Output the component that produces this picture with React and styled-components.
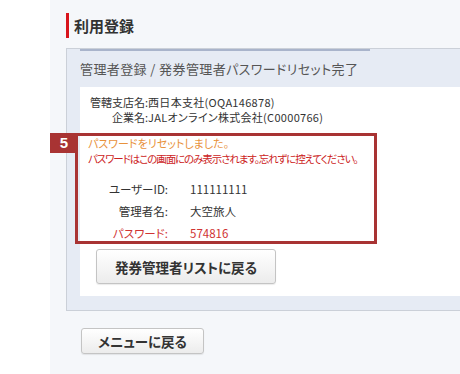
import React from "react";
import styled, { createGlobalStyle } from "styled-components";

const GlobalStyle = createGlobalStyle`
  html, body {
    margin: 0;
    padding: 0;
    background: #ffffff;
  }
  body {
    font-family: "Noto Sans CJK JP", "Liberation Sans", sans-serif;
    font-feature-settings: "palt";
    color: #333333;
  }
`;

const Page = styled.div`
  display: flex;
  height: 374px;
  overflow: hidden;
  padding-left: 50px;
`;

const Main = styled.main`
  flex: 1;
  background: #f5f7fa;
  padding: 13px 0 0 16px;
`;

const Title = styled.h1`
  margin: 0 0 10px;
  height: 25px;
  line-height: 25px;
  border-left: 3px solid #d8141c;
  padding-left: 5px;
  font-size: 15px;
  font-weight: 700;
  color: #333333;
`;

const Panel = styled.section`
  background: #e6ebf4;
  border: 1px solid #cbd0d8;
  border-right: none;
  padding: 0 0 14px 13px;
`;

const HeadRule = styled.div`
  width: 290px;
  height: 2px;
  background: #a9b4cb;
`;

const PanelHead = styled.h2`
  margin: 0;
  height: 36px;
  line-height: 36px;
  font-size: 13px;
  font-weight: 400;
  color: #555555;
  letter-spacing: 0.4px;
`;

const Sheet = styled.div`
  background: #ffffff;
  padding: 8px 0 12px 10px;
`;

const InfoList = styled.dl`
  display: grid;
  grid-template-columns: max-content 1fr;
  margin: 0;
  font-size: 11px;
  line-height: 15px;
  color: #333333;
`;

const InfoLabel = styled.dt`
  text-align: right;
`;

const InfoValue = styled.dd`
  margin: 0;
  letter-spacing: 0.3px;
`;

const Notice = styled.div`
  position: relative;
  box-sizing: border-box;
  margin: 8px 0 0 -15px;
  width: 302px;
  height: 111px;
  border: 3px solid #a83333;
  padding: 0 0 0 10px;
`;

const Badge = styled.span`
  position: absolute;
  left: -28px;
  top: -3px;
  width: 28px;
  height: 20px;
  background: #a83333;
  color: #ffffff;
  font-family: "Liberation Sans", Arial, sans-serif;
  font-size: 15px;
  font-weight: 700;
  line-height: 20px;
  text-align: center;
`;

const Message = styled.p`
  margin: 0;
  white-space: nowrap;
  font-size: ${({ $tone }) => ($tone === "warn" ? "11px" : "10.5px")};
  letter-spacing: ${({ $tone }) => ($tone === "warn" ? "0" : "-1.1px")};
  line-height: 15px;
  color: ${({ $tone }) => ($tone === "warn" ? "#e8923c" : "#cc2222")};
`;

const Result = styled.div`
  display: grid;
  grid-template-columns: 80px 1fr;
  column-gap: 22px;
  row-gap: 2px;
  margin-top: 13px;
  font-size: 11.5px;
  line-height: 20px;
`;

const ResultLabel = styled.span`
  text-align: right;
  color: ${({ $alert }) => ($alert ? "#d03333" : "#333333")};
`;

const ResultValue = styled.span`
  color: ${({ $alert }) => ($alert ? "#d03333" : "#333333")};
`;

const Button = styled.button`
  display: block;
  box-sizing: border-box;
  width: ${({ $w }) => $w}px;
  height: ${({ $h }) => $h}px;
  margin: ${({ $m }) => $m};
  padding: 0;
  border: 1px solid #c4c4c4;
  border-radius: 3px;
  background: linear-gradient(#ffffff, #ececec);
  box-shadow: 0 1px 1px rgba(0, 0, 0, 0.08);
  font-family: inherit;
  font-feature-settings: "palt";
  font-size: 13.5px;
  font-weight: 700;
  color: #333333;
  cursor: pointer;
`;

export default function App() {
  return (
    <>
      <GlobalStyle />
      <Page>
        <Main>
          <Title>利用登録</Title>
          <Panel>
            <HeadRule />
            <PanelHead>管理者登録 / 発券管理者パスワードリセット完了</PanelHead>
            <Sheet>
              <InfoList>
                <InfoLabel>管轄支店名:</InfoLabel>
                <InfoValue>西日本支社(OQA146878)</InfoValue>
                <InfoLabel>企業名:</InfoLabel>
                <InfoValue>JALオンライン株式会社(C0000766)</InfoValue>
              </InfoList>
              <Notice>
                <Badge>5</Badge>
                <Message $tone="warn">パスワードをリセットしました。</Message>
                <Message>
                  パスワードはこの画面にのみ表示されます。忘れずに控えてください。
                </Message>
                <Result>
                  <ResultLabel>ユーザーID:</ResultLabel>
                  <ResultValue>111111111</ResultValue>
                  <ResultLabel>管理者名:</ResultLabel>
                  <ResultValue>大空旅人</ResultValue>
                  <ResultLabel $alert>パスワード:</ResultLabel>
                  <ResultValue $alert>574816</ResultValue>
                </Result>
              </Notice>
              <Button $w={180} $h={35} $m="5px 0 0 6px">
                発券管理者リストに戻る
              </Button>
            </Sheet>
          </Panel>
          <Button $w={123} $h={26} $m="17px 0 0 15px">
            メニューに戻る
          </Button>
        </Main>
      </Page>
    </>
  );
}
